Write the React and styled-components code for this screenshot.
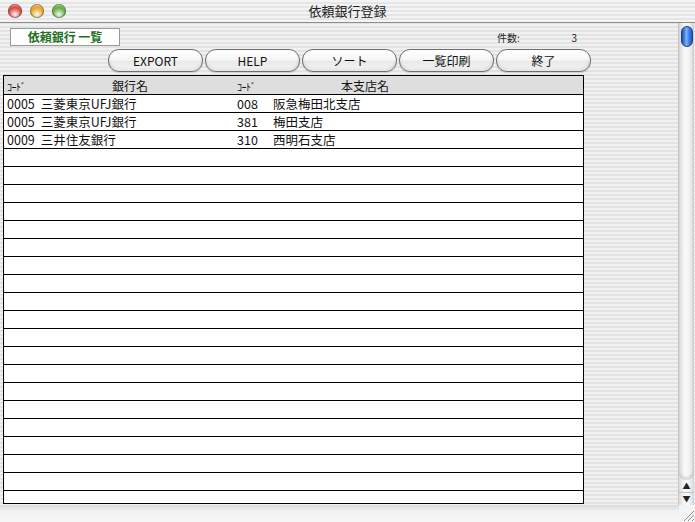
import React from 'react'
import styled, { createGlobalStyle } from 'styled-components'

const GlobalStyle = createGlobalStyle`
  html, body {
    margin: 0;
    padding: 0;
    background: #fff;
  }
  body {
    font-family: "Noto Sans CJK JP", "Liberation Sans", sans-serif;
  }
`

const stripes = `repeating-linear-gradient(
  to bottom,
  #f1f1f1 0px,
  #f1f1f1 2px,
  #e3e3e3 2px,
  #e3e3e3 4px
)`

const rows = [
  { code: '0005', bank: '三菱東京UFJ銀行', bcode: '008', branch: '阪急梅田北支店' },
  { code: '0005', bank: '三菱東京UFJ銀行', bcode: '381', branch: '梅田支店' },
  { code: '0009', bank: '三井住友銀行', bcode: '310', branch: '西明石支店' },
]

const buttons = ['EXPORT', 'HELP', 'ソート', '一覧印刷', '終了']

function App() {
  const blanks = Array.from({ length: 20 })
  return (
    <>
      <GlobalStyle />
      <Window>
        <TitleBar>
          <Lights>
            <Light color="#d8322b" />
            <Light color="#e49a12" />
            <Light color="#4fa82a" />
          </Lights>
          <Title>依頼銀行登録</Title>
        </TitleBar>
        <Body>
          <Main>
            <TopRow>
              <ListLabel>依頼銀行 一覧</ListLabel>
              <Count>
                <span>件数:</span>
                <CountValue>3</CountValue>
              </Count>
            </TopRow>
            <ButtonRow>
              {buttons.map((b) => (
                <AquaButton key={b}>{b}</AquaButton>
              ))}
            </ButtonRow>
            <TableBox>
              <HeaderRow>
                <Cell w={30}><Kana>ｺｰﾄﾞ</Kana></Cell>
                <Cell w={192} center>銀行名</Cell>
                <Cell w={8} />
                <Cell w={30}><Kana>ｺｰﾄﾞ</Kana></Cell>
                <Cell w={202} center>本支店名</Cell>
              </HeaderRow>
              {rows.map((r, i) => (
                <Row key={i}>
                  <Cell w={230}>
                    {r.code}
                    <Gap />
                    {r.bank}
                  </Cell>
                  <Cell w={36}>{r.bcode}</Cell>
                  <Cell w={200}>{r.branch}</Cell>
                </Row>
              ))}
              {blanks.map((_, i) => (
                <Row key={'b' + i} />
              ))}
            </TableBox>
          </Main>
          <ScrollBar>
            <Track>
              <Thumb />
            </Track>
            <Arrow>▲</Arrow>
            <Arrow bottom>▼</Arrow>
          </ScrollBar>
        </Body>
        <StatusBar>
          <Grip>
            <svg width="14" height="14" viewBox="0 0 14 14">
              <path d="M3 13 L13 3 M7 13 L13 7 M11 13 L13 11" stroke="#888" strokeWidth="1" />
              <path d="M4 13 L13 4 M8 13 L13 8" stroke="#fff" strokeWidth="1" />
            </svg>
          </Grip>
        </StatusBar>
      </Window>
    </>
  )
}

export default App

const Window = styled.div`
  width: 695px;
  height: 522px;
  display: flex;
  flex-direction: column;
  background: ${stripes};
  overflow: hidden;
`

const TitleBar = styled.div`
  height: 22px;
  flex: 0 0 22px;
  position: relative;
  display: flex;
  align-items: center;
  background: repeating-linear-gradient(
    to bottom,
    #f4f4f4 0px,
    #f4f4f4 2px,
    #e6e6e6 2px,
    #e6e6e6 4px
  );
  border-bottom: 1px solid #8d8d8d;
`

const Lights = styled.div`
  display: flex;
  gap: 8px;
  padding-left: 8px;
  z-index: 1;
`

const Light = styled.span`
  width: 14px;
  height: 14px;
  border-radius: 50%;
  background: radial-gradient(circle at 50% 75%, rgba(255, 255, 255, 0.55) 0%, ${(p) => p.color} 60%, ${(p) => p.color} 100%);
  box-shadow: inset 0 0 0 1px rgba(0, 0, 0, 0.35), inset 0 3px 2px -1px rgba(255, 255, 255, 0.6);
`

const Title = styled.div`
  position: absolute;
  left: 0;
  right: 0;
  text-align: center;
  font-size: 13px;
  color: #222;
  line-height: 22px;
`

const Body = styled.div`
  flex: 1;
  display: flex;
  min-height: 0;
`

const Main = styled.div`
  flex: 1;
  display: flex;
  flex-direction: column;
  padding: 5px 0 0 3px;
  min-height: 0;
`

const TopRow = styled.div`
  display: flex;
  align-items: center;
  height: 18px;
`

const ListLabel = styled.div`
  margin-left: 7px;
  width: 108px;
  height: 16px;
  background: #fff;
  border: 1px solid #9a9a9a;
  color: #23701f;
  font-weight: bold;
  font-size: 12px;
  line-height: 16px;
  text-align: center;
`

const Count = styled.div`
  margin-left: 377px;
  display: flex;
  font-size: 10px;
  color: #222;
  width: 80px;
`

const CountValue = styled.span`
  margin-left: auto;
`

const ButtonRow = styled.div`
  display: flex;
  gap: 2px;
  margin: 3px 0 0 105px;
  height: 23px;
`

const AquaButton = styled.div`
  width: 93px;
  height: 21px;
  border: 1px solid #6f6f6f;
  border-radius: 11px;
  background: linear-gradient(to bottom, #ffffff 0%, #f7f7f7 45%, #e9e9e9 55%, #f1f1f1 85%, #ffffff 100%);
  box-shadow: inset 0 -2px 3px rgba(0, 0, 0, 0.1), 0 1px 1px rgba(0, 0, 0, 0.15);
  font-size: 12px;
  color: #111;
  display: flex;
  align-items: center;
  justify-content: center;
`

const TableBox = styled.div`
  margin-top: 3px;
  width: 579px;
  height: 427px;
  border: 1px solid #000;
  background: #fff;
  overflow: hidden;
`

const HeaderRow = styled.div`
  display: flex;
  align-items: center;
  height: 18px;
  background: #dedede;
  border-bottom: 1px solid #000;
  font-size: 12px;
  color: #111;
`

const Row = styled.div`
  display: flex;
  align-items: center;
  height: 17px;
  border-bottom: 1px solid #000;
  font-size: 12.5px;
  color: #111;
`

const Cell = styled.div`
  width: ${(p) => p.w}px;
  flex: 0 0 ${(p) => p.w}px;
  padding-left: ${(p) => (p.center ? 0 : 3)}px;
  text-align: ${(p) => (p.center ? 'center' : 'left')};
  white-space: nowrap;
  box-sizing: border-box;
`

const Gap = styled.span`
  display: inline-block;
  width: 6px;
`

const Kana = styled.span`
  font-size: 10px;
  letter-spacing: -0.5px;
`

const ScrollBar = styled.div`
  width: 15px;
  margin-right: 1px;
  display: flex;
  flex-direction: column;
  background: linear-gradient(to right, #dcdcdc, #fafafa 40%, #f2f2f2 70%, #d6d6d6);
  border-left: 1px solid #c6c6c6;
`

const Track = styled.div`
  flex: 1;
  padding-top: 3px;
  display: flex;
  justify-content: center;
  border-bottom-left-radius: 7px;
  border-bottom-right-radius: 7px;
  box-shadow: inset 0 -3px 3px rgba(0, 0, 0, 0.12);
`

const Thumb = styled.div`
  width: 12px;
  height: 21px;
  border-radius: 6px;
  background: linear-gradient(to right, #1a4fb8, #7fb0f4 45%, #3f82e6 70%, #1c56c0);
  border: 1px solid #1d3f8a;
  box-sizing: border-box;
`

const Arrow = styled.div`
  height: 12px;
  font-size: 8px;
  line-height: 12px;
  text-align: center;
  color: #222;
  border-top: ${(p) => (p.bottom ? '1px solid #c0c0c0' : 'none')};
`

const StatusBar = styled.div`
  height: 17px;
  flex: 0 0 17px;
  display: flex;
  justify-content: flex-end;
  background: linear-gradient(to bottom, #dadada, #f3f3f3 40%, #f6f6f6);
`

const Grip = styled.div`
  width: 16px;
  display: flex;
  align-items: flex-end;
  justify-content: flex-end;
  background: #f4f4f4;
`
